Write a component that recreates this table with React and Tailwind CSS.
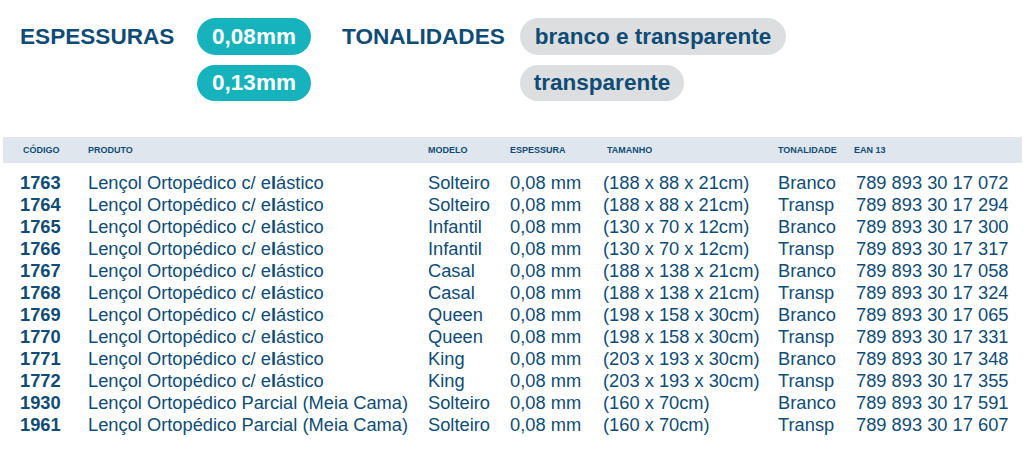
import React from "react";

const rows = [
  ["1763", "c", "Solteiro", "(188 x 88 x 21cm)", "Branco", "789 893 30 17 072"],
  ["1764", "c", "Solteiro", "(188 x 88 x 21cm)", "Transp", "789 893 30 17 294"],
  ["1765", "c", "Infantil", "(130 x 70 x 12cm)", "Branco", "789 893 30 17 300"],
  ["1766", "c", "Infantil", "(130 x 70 x 12cm)", "Transp", "789 893 30 17 317"],
  ["1767", "c", "Casal", "(188 x 138 x 21cm)", "Branco", "789 893 30 17 058"],
  ["1768", "c", "Casal", "(188 x 138 x 21cm)", "Transp", "789 893 30 17 324"],
  ["1769", "c", "Queen", "(198 x 158 x 30cm)", "Branco", "789 893 30 17 065"],
  ["1770", "c", "Queen", "(198 x 158 x 30cm)", "Transp", "789 893 30 17 331"],
  ["1771", "c", "King", "(203 x 193 x 30cm)", "Branco", "789 893 30 17 348"],
  ["1772", "c", "King", "(203 x 193 x 30cm)", "Transp", "789 893 30 17 355"],
  ["1930", "p", "Solteiro", "(160 x 70cm)", "Branco", "789 893 30 17 591"],
  ["1961", "p", "Solteiro", "(160 x 70cm)", "Transp", "789 893 30 17 607"],
];

const grid =
  "grid grid-cols-[68px_340px_82px_93px_175px_78px_1fr] pl-[17px]";

export default function App() {
  return (
    <div
      className="w-[1024px] h-[449px] bg-white text-[#0f4c75] overflow-hidden"
      style={{ fontFamily: '"Liberation Sans", Arial, sans-serif' }}
    >
      {/* top */}
      <div className="flex pl-[20px] pt-[18px]">
        <div className="w-[177px] h-[37px] flex items-center text-[22.6px] font-bold">
          ESPESSURAS
        </div>
        <div className="w-[145px] flex flex-col gap-[10px]">
          <div className="w-[114px] h-[37px] rounded-full bg-[#17b3bc] text-white text-[22.5px] font-bold flex items-center justify-center">
            0,08mm
          </div>
          <div className="w-[114px] h-[36px] rounded-full bg-[#17b3bc] text-white text-[22.5px] font-bold flex items-center justify-center">
            0,13mm
          </div>
        </div>
        <div className="w-[178px] h-[37px] flex items-center text-[22.6px] font-bold">
          TONALIDADES
        </div>
        <div className="flex flex-col items-start gap-[10px]">
          <div className="w-[266px] h-[37px] rounded-full bg-[#dcdee0] text-[22.5px] font-bold flex items-center justify-center">
            branco e transparente
          </div>
          <div className="w-[164px] h-[36px] rounded-full bg-[#dcdee0] text-[22.5px] font-bold flex items-center justify-center">
            transparente
          </div>
        </div>
      </div>

      {/* table */}
      <div className="mt-[36px] ml-[3px] w-[1019px]">
        <div className={`${grid} h-[26px] items-center bg-[#dfe6ee] text-[9px] font-bold pt-[1px]`}>
          <div className="pl-[3px]">CÓDIGO</div>
          <div>PRODUTO</div>
          <div>MODELO</div>
          <div>ESPESSURA</div>
          <div className="pl-[4px]">TAMANHO</div>
          <div>TONALIDADE</div>
          <div className="-ml-[2px]">EAN 13</div>
        </div>
        <div className="pt-[9px]">
          {rows.map((r) => (
            <div
              key={r[0]}
              className={`${grid} h-[22px] items-center text-[18.3px] leading-[22px] whitespace-nowrap`}
            >
              <div className="font-bold">{r[0]}</div>
              <div>
                {r[1] === "c" ? (
                  <>
                    Lençol Ortopédico c/ e<span className="font-bold">l</span>ástico
                  </>
                ) : (
                  "Lençol Ortopédico Parcial (Meia Cama)"
                )}
              </div>
              <div>{r[2]}</div>
              <div>0,08 mm</div>
              <div>{r[3]}</div>
              <div>{r[4]}</div>
              <div>{r[5]}</div>
            </div>
          ))}
        </div>
      </div>
    </div>
  );
}
